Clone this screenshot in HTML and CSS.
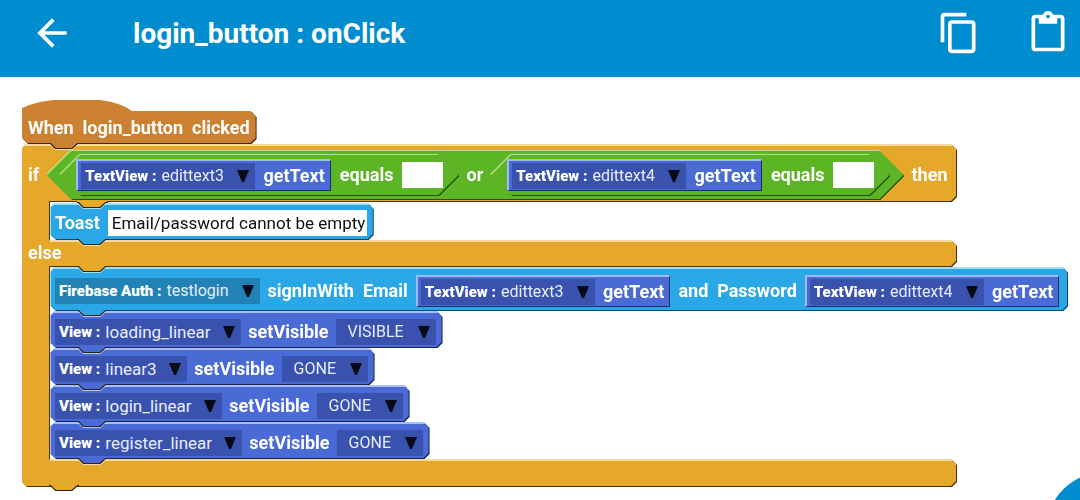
FILE: index.html
```html
<!DOCTYPE html>
<html lang="en">
<head>
<meta charset="utf-8">
<meta name="viewport" content="width=device-width, initial-scale=1">
<title>login_button : onClick</title>
<link rel="stylesheet" href="styles.css">
</head>
<body>
<svg class="defs" aria-hidden="true">
  <symbol id="arrow" viewBox="0 0 12 12"><path d="M0 0H12L7 12H5Z"/></symbol>
  <symbol id="notch" viewBox="0 0 32 10">
    <path d="M1 2.500L6 7.500H23.500L29 2.500" fill="none" stroke="#fff" stroke-opacity=".6"/>
    <path d="M0 0H30V1.500H28.500L23 6.500H6.500L1.500 1.500H0Z"/>
    <path d="M0 1.500H1.500L6.500 6.500H23L28.500 1.500H30" fill="none" stroke="#2b2413" stroke-width="1.200"/>
  </symbol>
</svg>

<header class="bar">
  <button class="icon-button" aria-label="Back"><svg viewBox="0 0 24 24"><path d="M20 11H7.83l5.59-5.59L12 4l-8 8 8 8 1.41-1.41L7.83 13H20v-2z"/></svg></button>
  <h1 class="bar-title">login_button : onClick</h1>
  <button class="icon-button" aria-label="Copy"><svg viewBox="0 0 24 24"><path d="M16 1H4c-1.100 0-2 .9-2 2v14h2V3h12V1zm3 4H8c-1.100 0-2 .9-2 2v14c0 1.100.9 2 2 2h11c1.100 0 2-.9 2-2V7c0-1.100-.9-2-2-2zm0 16H8V7h11v14z"/></svg></button>
  <button class="icon-button" aria-label="Paste"><svg viewBox="0 0 24 24"><path d="M19 2h-4.180C14.400.840 13.300 0 12 0c-1.300 0-2.400.840-2.820 2H5c-1.100 0-2 .9-2 2v16c0 1.100.9 2 2 2h14c1.100 0 2-.9 2-2V4c0-1.100-.9-2-2-2zm-7 0c.55 0 1 .45 1 1s-.45 1-1 1-1-.45-1-1 .45-1 1-1zm7 18H5V4h2v3h10V4h2v16z"/></svg></button>
</header>

<main class="canvas">
  <div class="hat">
    <svg class="hat-dome" viewBox="0 0 112 12" aria-hidden="true"><path d="M0 12V8Q12 2 32 0H78Q100 3 110 11V12Z"/></svg>
    <div class="block hat-body">When&nbsp; login_button&nbsp; clicked</div>
  </div>

  <div class="block bar-row if-row">
    <svg class="notch under-hat"><use href="#notch"/></svg>
    <span>if</span>
    <div class="hex hex-outer">
      <div class="hex hex-inner">
        <div class="getter">
          <label class="field"><b>TextView :</b><select><option>edittext3</option></select><svg><use href="#arrow"/></svg></label>
          <span>getText</span>
        </div>
        <span>equals</span>
        <input class="blank" type="text" aria-label="First compared text">
      </div>
      <span>or</span>
      <div class="hex hex-inner">
        <div class="getter">
          <label class="field"><b>TextView :</b><select><option>edittext4</option></select><svg><use href="#arrow"/></svg></label>
          <span>getText</span>
        </div>
        <span>equals</span>
        <input class="blank" type="text" aria-label="Second compared text">
      </div>
    </div>
    <span>then</span>
  </div>

  <div class="branch branch-then">
    <div class="block statement cyan toast">
      <svg class="notch"><use href="#notch"/></svg>
      <label for="toast-text">Toast</label>
      <input class="toast-text" id="toast-text" type="text" value="Email/password cannot be empty">
    </div>
  </div>

  <div class="block bar-row else-row"><svg class="notch under-cyan"><use href="#notch"/></svg>else</div>

  <div class="branch">
    <div class="block statement cyan sign-in">
      <svg class="notch"><use href="#notch"/></svg>
      <label class="field"><b>Firebase Auth :</b><select><option>testlogin</option></select><svg><use href="#arrow"/></svg></label>
      <span>signInWith&nbsp; Email</span>
      <div class="getter">
        <label class="field"><b>TextView :</b><select><option>edittext3</option></select><svg><use href="#arrow"/></svg></label>
        <span>getText</span>
      </div>
      <span>and&nbsp; Password</span>
      <div class="getter">
        <label class="field"><b>TextView :</b><select><option>edittext4</option></select><svg><use href="#arrow"/></svg></label>
        <span>getText</span>
      </div>
    </div>
    <div class="block statement blue">
      <svg class="notch under-cyan"><use href="#notch"/></svg>
      <label class="field view"><b>View :</b><select><option>loading_linear</option></select><svg><use href="#arrow"/></svg></label>
      <span>setVisible</span>
      <label class="field state"><select aria-label="Visibility of loading_linear"><option>VISIBLE</option></select><svg><use href="#arrow"/></svg></label>
    </div>
    <div class="block statement blue">
      <svg class="notch under-blue"><use href="#notch"/></svg>
      <label class="field view"><b>View :</b><select><option>linear3</option></select><svg><use href="#arrow"/></svg></label>
      <span>setVisible</span>
      <label class="field state"><select aria-label="Visibility of linear3"><option>GONE</option></select><svg><use href="#arrow"/></svg></label>
    </div>
    <div class="block statement blue">
      <svg class="notch under-blue"><use href="#notch"/></svg>
      <label class="field view"><b>View :</b><select><option>login_linear</option></select><svg><use href="#arrow"/></svg></label>
      <span>setVisible</span>
      <label class="field state"><select aria-label="Visibility of login_linear"><option>GONE</option></select><svg><use href="#arrow"/></svg></label>
    </div>
    <div class="block statement blue">
      <svg class="notch under-blue"><use href="#notch"/></svg>
      <label class="field view"><b>View :</b><select><option>register_linear</option></select><svg><use href="#arrow"/></svg></label>
      <span>setVisible</span>
      <label class="field state"><select aria-label="Visibility of register_linear"><option>GONE</option></select><svg><use href="#arrow"/></svg></label>
    </div>
  </div>

  <div class="block bar-row end-row"><svg class="notch under-blue"><use href="#notch"/></svg></div>
  <svg class="tab"><use href="#notch"/></svg>
</main>

<button class="fab" aria-label="Add block"></button>
</body>
</html>
```

FILE: styles.css
```css
:root {
  --header: #008dcf;
  --hat: #cb8130;
  --orange: #e5a82a;
  --cyan: #29a7e7;
  --blue: #4a6bd6;
  --green: #5cb524;
}

* { box-sizing: border-box; }

body {
  margin: 0;
  background: #fff;
  color: #fff;
  font: 700 18px/24px Roboto, sans-serif;
}

.defs { display: none; }

button, input, select { font: inherit; color: inherit; border: 0; padding: 0; margin: 0; }

.bar {
  display: flex;
  align-items: center;
  gap: 45px;
  padding: 11px 10px 22px 30px;
  background: var(--header);
}
.bar-title { flex: 1; margin: 0 0 0 14px; padding-top: 2px; font-size: 28px; line-height: 32px; }
.icon-button { width: 44px; height: 44px; background: none; }
.icon-button svg { display: block; width: 44px; height: 44px; fill: #fff; }

.canvas {
  display: flex;
  flex-direction: column;
  align-items: flex-start;
  padding: 23px 0 0 22px;
  white-space: nowrap;
}

/* Every block is a bevelled shape: clipped fill, dark edge at the lower right. */
.block {
  position: relative;
  display: flex;
  align-items: center;
  filter: drop-shadow(1px 1px 0 var(--edge));
  --edge: #463410;
}
.block::before {
  content: "";
  position: absolute;
  inset: 0;
  z-index: -1;
  background: linear-gradient(var(--shine), var(--shine)) var(--shine-x, 0) 0 / 100% 2px no-repeat var(--fill);
  clip-path: polygon(5px 0, calc(100% - 5px) 0, 100% 5px, 100% calc(100% - 5px), calc(100% - 5px) 100%, 5px 100%, 0 calc(100% - 5px), 0 5px);
}

/* The tab of the block above, laid over this block's top edge. */
.notch {
  position: absolute;
  top: -2px;
  left: 27px;
  width: 32px;
  height: 10px;
  fill: var(--orange);
}
.under-hat { fill: var(--hat); }
.under-cyan { fill: var(--cyan); }
.under-blue { fill: var(--blue); }
.tab { position: relative; width: 32px; height: 10px; margin: -2px 0 0 27px; fill: var(--orange); }

.hat-dome { display: block; width: 112px; height: 12px; margin-bottom: -1px; fill: var(--hat); }
.hat-body { height: 32px; padding: 2px 6px 0; --fill: var(--hat); --shine: var(--hat); --edge: #40280f; }
.hat-body::before { clip-path: polygon(0 0, calc(100% - 5px) 0, 100% 5px, 100% calc(100% - 5px), calc(100% - 5px) 100%, 5px 100%, 0 calc(100% - 5px)); }
.hat { margin-bottom: 1px; }

.bar-row { width: 934px; padding-left: 6px; --fill: var(--orange); --shine: #f6d9a0; }
.if-row { width: auto; min-width: 934px; padding: 7px 8px 2px 6px; gap: 8px; }
.if-row::before { clip-path: polygon(4px 0, calc(100% - 5px) 0, 100% 5px, 100% calc(100% - 5px), calc(100% - 5px) 100%, 0 100%, 0 4px); }
.else-row { height: 26px; --shine-x: 28px; }
.else-row::before { clip-path: polygon(0 0, calc(100% - 5px) 0, 100% 5px, 100% calc(100% - 5px), calc(100% - 5px) 100%, 0 100%); }
.end-row { height: 27px; --shine-x: 28px; }
.end-row::before { clip-path: polygon(0 0, calc(100% - 5px) 0, 100% 5px, 100% calc(100% - 5px), calc(100% - 5px) 100%, 4px 100%, 0 calc(100% - 4px)); }
.else-row .notch, .end-row .notch { left: 55px; }

.hex { position: relative; display: flex; align-items: center; filter: drop-shadow(-1px -1px 0 #b4e08c) drop-shadow(1px 1px 0 #24500c); }
.hex::before {
  content: "";
  position: absolute;
  inset: 0;
  z-index: -1;
  background: var(--green);
  clip-path: polygon(var(--tip) 0, calc(100% - var(--tip)) 0, 100% 50%, calc(100% - var(--tip)) 100%, var(--tip) 100%, 0 50%);
}
.hex-outer { height: 48px; padding: 0 14px 0 13px; gap: 8px; --tip: 24px; }
.hex-inner { height: 40px; padding: 0 15px 0 16px; gap: 9px; --tip: 20px; }

.blank { width: 41px; height: 26px; background: #fff; color: #111; }

.getter {
  display: flex;
  align-items: center;
  gap: 8px;
  height: 32px;
  padding: 0 5px 0 3px;
  background: var(--blue);
  border: 2px solid;
  border-width: 2px 1px 1px 2px;
  border-color: #a3baf8 #1c2c66 #1c2c66 #a3baf8;
}

.field {
  display: flex;
  align-items: center;
  height: 26px;
  padding: 0 6px 0 4px;
  background: #3952ae;
  color: #fff;
  font-size: 16px;
}
.field b { font-size: 15px; margin-right: 5px; }
.field select { appearance: none; background: none; font-weight: 400; color: #e8edff; line-height: 24px; }
.field svg { width: 12px; height: 12px; margin-left: 13px; fill: #070b18; }
.field.view { font-size: 17px; }
.field.view svg { margin-left: 12px; }
.field.state { padding-left: 12px; }

.branch {
  position: relative;
  display: flex;
  flex-direction: column;
  align-items: flex-start;
  gap: 1px;
  padding: 1px 0 1px 28px;
  background: linear-gradient(90deg, var(--orange) 27px, #46381c 27px) 0 0 / 28px 100% no-repeat;
}
.branch-then { padding-top: 2px; }

.statement { height: 36px; padding: 6px 6px 1px 5px; gap: 7px; }
.statement::before { box-shadow: inset 1px 0 var(--shine); }
.cyan { --fill: var(--cyan); --shine: #a5def8; --edge: #104a68; }
.cyan .field { background: #2183b5; }
.cyan .getter .field { background: #3952ae; }
.blue { --fill: var(--blue); --shine: #a9bcf5; --edge: #18234f; }
.toast { padding-top: 5px; gap: 8px; }
.toast-text { width: 259px; height: 26px; padding: 0 0 0 4px; background: #fff; color: #111; font-weight: 400; font-size: 17px; }
.sign-in { height: 43px; padding: 5px 8px 0 5px; gap: 8px; }

.fab {
  position: fixed;
  right: -84px;
  bottom: -90px;
  width: 118px;
  height: 118px;
  border-radius: 50%;
  background: var(--header);
}
```
